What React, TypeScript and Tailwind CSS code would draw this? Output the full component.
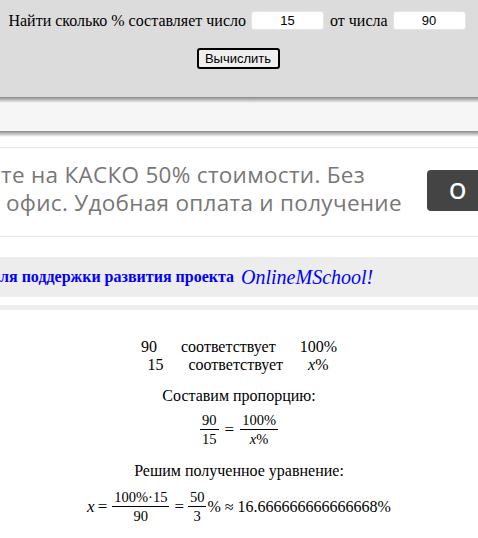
import React from 'react';

function Frac({ num, den, className = '' }: { num: React.ReactNode; den: React.ReactNode; className?: string }) {
  return (
    <span className={`inline-flex flex-col items-center align-middle text-[14.5px] ${className}`}>
      <span className="px-[2px] leading-[17px] border-b border-black">{num}</span>
      <span className="px-[2px] leading-[18px]">{den}</span>
    </span>
  );
}

export default function App() {
  return (
    <div className="w-[478px] h-[538px] overflow-hidden bg-white font-['Liberation_Serif',serif] text-black">
      {/* calculator panel */}
      <div className="h-[97px] bg-[#dcdcdc] flex flex-col items-center pt-[11px]">
        <div className="flex items-center text-[16px] leading-[19px] -ml-[4px]">
          <span>Найти сколько % составляет число</span>
          <input
            defaultValue="15"
            className="ml-[5px] w-[73px] h-[19px] rounded-[3px] border border-[#e4e4e4] bg-white text-center text-[13px] font-['Liberation_Sans',sans-serif] outline-none"
          />
          <span className="ml-[6px]">от числа</span>
          <input
            defaultValue="90"
            className="ml-[5px] w-[73px] h-[19px] rounded-[3px] border border-[#e4e4e4] bg-white text-center text-[13px] font-['Liberation_Sans',sans-serif] outline-none"
          />
        </div>
        <button className="mt-[18px] w-[83px] h-[21px] rounded-[3px] border-2 border-black bg-[#efefef] text-[13px] leading-none font-['Liberation_Sans',sans-serif] -ml-[2px]">
          Вычислить
        </button>
      </div>
      <div className="h-[34px] bg-[#f6f6f6]">
        <div className="h-[6px] bg-gradient-to-b from-[#8a8a8a] to-[#f6f6f6]" />
      </div>
      <div className="h-[6px] bg-gradient-to-b from-[#8a8a8a] to-white" />

      {/* ad block */}
      <div className="mt-[10px] h-[90px] border-y border-[#e6e6e6] flex items-center justify-between font-['Open_Sans',sans-serif] text-[#777]">
        <div className="text-[22.5px] tracking-[0.3px] leading-[28px] whitespace-nowrap pb-[6px]">
          <div className="ml-[1px]">те на КАСКО 50% стоимости. Без</div>
          <div className="ml-[6px]">офис. Удобная оплата и получение</div>
        </div>
        <div className="w-[51px] h-[41px] bg-[#444] rounded-l-[4px] pl-[22px] text-white text-[22px] font-semibold leading-[41px] overflow-hidden mb-[4px]">
          О
        </div>
      </div>

      {/* support banner */}
      <div className="mt-[20px] h-[40px] bg-[#ededed] flex items-center whitespace-nowrap text-[#0000ff]">
        <span className="font-bold text-[16px]">ля поддержки развития проекта</span>
        <span className="ml-[7px] italic text-[20px]">OnlineMSchool!</span>
      </div>
      <div className="mt-[8px] h-[5px] bg-[#ededed]" />

      {/* solution */}
      <div className="flex flex-col items-center text-[16px] leading-[18px] pt-[28px]">
        <div className="flex gap-[24px]">
          <span>90</span>
          <span>соответствует</span>
          <span>100%</span>
        </div>
        <div className="flex gap-[25px] -ml-[2px]">
          <span>15</span>
          <span>соответствует</span>
          <span><i>x</i>%</span>
        </div>
        <div className="mt-[13px]">Составим пропорцию:</div>
        <div className="mt-[7px] flex items-center gap-[6px]">
          <Frac num="90" den="15" />
          <span className="text-[17px]">=</span>
          <Frac num="100%" den={<span><i>x</i>%</span>} />
        </div>
        <div className="mt-[14px]">Решим полученное уравнение:</div>
        <div className="mt-[9px] flex items-center text-[16px]">
          <i className="text-[17px]">x</i>
          <span className="ml-[3px] text-[17px]">=</span>
          <Frac num="100%·15" den="90" className="ml-[5px]" />
          <span className="ml-[5px] text-[17px]">=</span>
          <Frac num="50" den="3" className="ml-[4px]" />
          <span className="ml-[1px]">% ≈ 16.666666666666668%</span>
        </div>
      </div>
    </div>
  );
}
